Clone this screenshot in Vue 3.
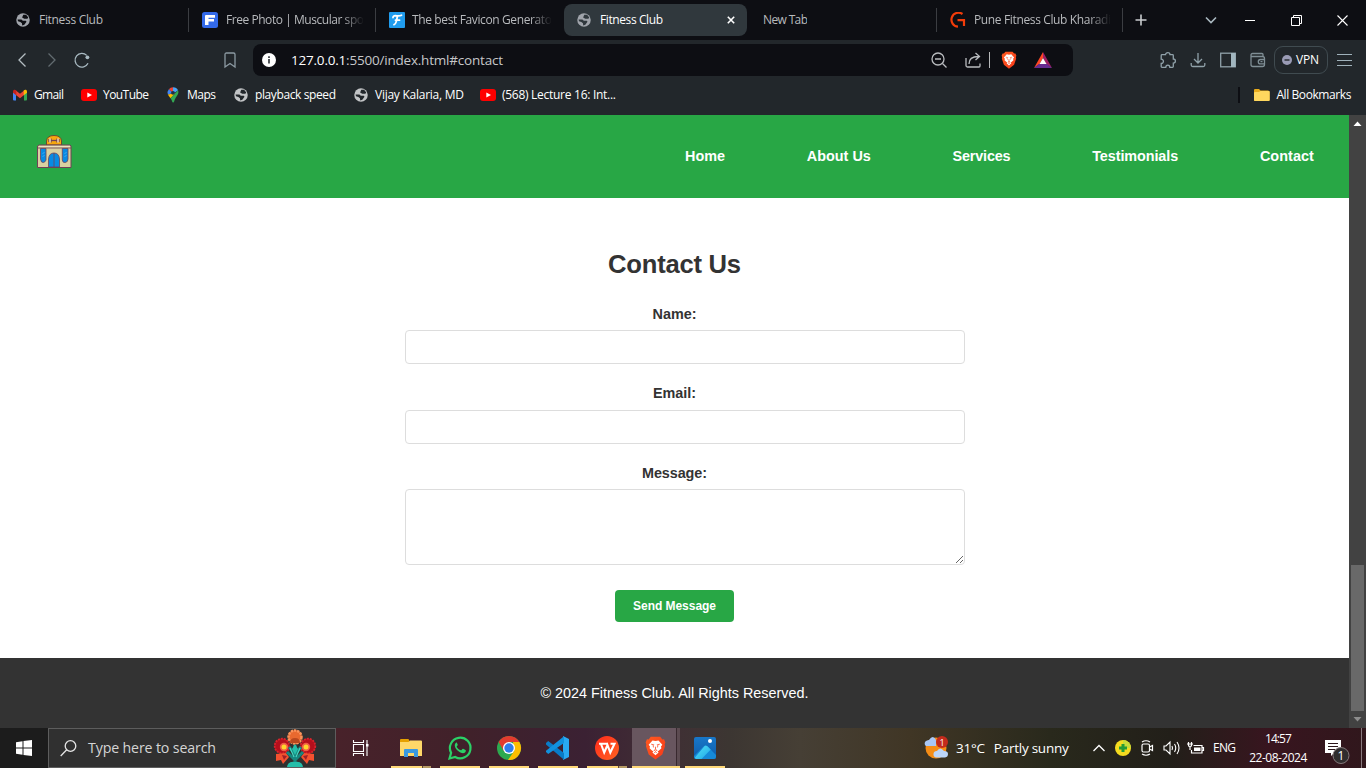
<script setup>
const tabs = [
  { title: 'Fitness Club', icon: 'globe', w: 64, cls: 'first' },
  { title: 'Free Photo | Muscular spo', icon: 'freepik', w: 138, cls: 'fade' },
  { title: 'The best Favicon Generato', icon: 'favicon', w: 140, cls: 'fade last-sep' },
  { title: 'Fitness Club', icon: 'globe', w: 63, cls: 'active' },
  { title: 'New Tab', icon: '', w: 45, cls: 'blank' },
  { title: 'Pune Fitness Club Kharadi', icon: 'gold', w: 137, cls: 'fade end' },
]
const bookmarks = [
  { title: 'Gmail', icon: 'gmail', w: 30, slot: 69 },
  { title: 'YouTube', icon: 'youtube', w: 46, slot: 84 },
  { title: 'Maps', icon: 'maps', w: 29, slot: 68 },
  { title: 'playback speed', icon: 'globe', w: 81, slot: 120 },
  { title: 'Vijay Kalaria, MD', icon: 'globe', w: 89, slot: 127 },
  { title: '(568) Lecture 16: Int...', icon: 'youtube', w: 114, slot: 140 },
]
const links = [
  { t: 'Home', w: 40 },
  { t: 'About Us', w: 64 },
  { t: 'Services', w: 58 },
  { t: 'Testimonials', w: 86 },
  { t: 'Contact', w: 54 },
]
// Tracks text so that it occupies the requested width.
const vFit = {
  mounted(el, { value }) {
    const natural = el.getBoundingClientRect().width
    const gaps = Math.max(1, el.textContent.length - 1)
    el.style.letterSpacing = `${(value - natural) / gaps}px`
  },
}
</script>

<template>
  <div class="screen">
    <svg width="0" height="0" class="defs">
      <defs>
        <linearGradient id="gPhoto" x1="0" y1="0" x2="0" y2="1"><stop offset="0" stop-color="#1877c9" /><stop offset="1" stop-color="#0f5ca9" /></linearGradient>
        <linearGradient id="gHill" x1="0" y1="0" x2="1" y2="1"><stop offset="0" stop-color="#52e1f5" /><stop offset="1" stop-color="#1fa7e8" /></linearGradient>
        <linearGradient id="gBrave" x1="0" y1="0" x2="1" y2="1"><stop offset="0" stop-color="#ff5a1f" /><stop offset="1" stop-color="#f6391a" /></linearGradient>
        <linearGradient id="gWps" x1="0" y1="0" x2="1" y2="1"><stop offset="0" stop-color="#ff2a1c" /><stop offset="1" stop-color="#ff6321" /></linearGradient>
        <symbol id="globe" viewBox="0 0 16 16">
          <circle cx="8" cy="8" r="7.700" fill="currentColor" />
          <path d="M8.300 2h3.200l2.500 3-1 1.500H9.500L7 5zM1.800 7.300h4.400l1.600 1.500h3.400l.8 1.200-2.500 3.300-2.400.9-.3-2.500-1.800-1.400-2.700-.8z" fill="var(--cut)" />
        </symbol>
        <symbol id="lion" viewBox="0 0 24 28">
          <path d="M6.500 1h11l2.500 3 2-.2 1.500 3.700-.8 2 .4 2.500-3.200 9.500-7.900 6-7.900-6L.9 12l.4-2.500-.8-2L2 3.800 4 4z" fill="url(#gBrave)" />
          <path d="M8.500 5.200l3.500.7 3.500-.7 4.500 5-1.600 2 .5 2.200-3.400 3.100-1.500-.6 1.600 2.300L12 22.600l-3.600-3.400 1.600-2.300-1.500.6-3.400-3.100.5-2.200-1.600-2z" fill="#fff" />
          <path d="M7 9.600l3 .6-.8 1.200.6 2M17 9.600l-3 .6.8 1.200-.6 2M12 12.500v3l-1.500 1.100 1.500 1 1.500-1-1.500-1.100M10.500 19.500l1.500-.9 1.500.9" fill="none" stroke="#fb461d" stroke-width=".9" />
        </symbol>
        <symbol id="youtube" viewBox="0 0 16 16"><rect y="2" width="16" height="12" rx="3" fill="#f00" /><path d="M6.300 5.400v5.200L11 8z" fill="#fff" /></symbol>
        <symbol id="gmail" viewBox="0 0 16 16"><path d="M1 5h3v8.500H2q-1 0-1-1z" fill="#4285f4" /><path d="M12 5h3v7.500q0 1-1 1h-2z" fill="#34a853" /><path d="M3.600 3.300L8 6.700l4.400-3.400v4.500L8 11.300 3.600 7.800z" fill="#ea4335" /><path d="M1 4.700C1 2.500 3 2.200 4.300 3.500V8.200L1 5.700z" fill="#c5221f" /><path d="M15 4.700c0-2.200-2-2.500-3.300-1.200V8.200L15 5.700z" fill="#fbbc04" /></symbol>
        <symbol id="maps" viewBox="0 0 16 16"><path d="M8 .3a5.500 5.500 0 0 0-4.200 2L8 6z" fill="#ea4335" /><path d="M3.800 2.300A5.300 5.300 0 0 0 2.900 7.600L8 6z" fill="#4285f4" /><path d="M8 .3c2.500 0 4.200 1.300 5 3L8 7z" fill="#4aa3f5" /><path d="M2.900 7.600c.5 1.300 1.500 2.400 2.600 3.600L10.500 6z" fill="#fbbc04" /><path d="M13 3.300c1.700 4.300-2.600 6.200-3.600 10.500-.5 2.400-2 2.400-2.500 0-.3-1-.7-1.800-1.400-2.600z" fill="#34a853" /><circle cx="8" cy="5.800" r="1.900" fill="#19324a" /></symbol>
        <symbol id="freepik" viewBox="0 0 16 16"><rect width="16" height="16" rx="2.500" fill="#336aea" /><path d="M4 3h9v2.800H6.500v1.200H12v2.500H6.500V13H3V4q0-1 1-1z" fill="#fff" /></symbol>
        <symbol id="favicon" viewBox="0 0 16 16"><rect width="16" height="16" rx="1" fill="#209cee" /><path d="M4 5.500C4 3.500 6 3.700 8 3.800c2 .1 3.500 0 4.500-.6M8.500 4C7.500 8 7.500 12 5 12.700M6.500 8.200h4" fill="none" stroke="#fff" stroke-width="1.800" stroke-linecap="round" /></symbol>
        <symbol id="gold" viewBox="0 0 16 16"><path d="M12.500 2A7 7 0 1 0 8 14.700M7.500 8.200H14V14" fill="none" stroke="#f23c0a" stroke-width="2.200" /></symbol>
      </defs>
    </svg>

    <div class="tabbar">
      <div v-for="(tab, i) in tabs" :key="i" class="tab" :class="tab.cls">
        <svg v-if="tab.icon" class="fav" :class="tab.icon"><use :href="'#' + tab.icon" /></svg>
        <span class="clip"><span v-fit="tab.w" class="t">{{ tab.title }}</span></span>
        <svg v-if="tab.cls === 'active'" class="x" width="8" height="8" viewBox="0 0 8 8"><path d="M.8.800l6.400 6.400M7.200.800L.8 7.200" stroke="#fff" stroke-width="1.600" /></svg>
      </div>
      <div class="wc plus"><svg width="12" height="12"><path d="M6 .5v11M.5 6h11" stroke="#c9cccf" stroke-width="1.600" /></svg></div>
      <div class="wc chev"><svg width="12" height="8"><path d="M1 1.500l5 5 5-5" fill="none" stroke="#a9b8c0" stroke-width="1.600" /></svg></div>
      <div class="wc"><svg width="10" height="10"><path d="M0 5.500h10" stroke="#fff" /></svg></div>
      <div class="wc"><svg width="11" height="11" fill="none" stroke="#fff"><path d="M.5 2.500h8v8h-8zM2.500 2.500v-2h8v8h-2" /></svg></div>
      <div class="wc"><svg width="11" height="11"><path d="M.5.500l10 10M10.500.500l-10 10" stroke="#fff" stroke-width="1.100" /></svg></div>
    </div>

    <div class="toolbar">
      <div class="navs">
        <svg width="8" height="14" fill="none" stroke="#b4bdc2" stroke-width="1.300"><path d="M7.500.500L1 7l6.500 6.500" /></svg>
        <svg width="8" height="14" fill="none" stroke="#626b70" stroke-width="1.300"><path d="M.5.500L7 7 .5 13.500" /></svg>
        <svg width="16" height="16" fill="none" stroke="#a9bac2" stroke-width="1.300"><path d="M12.700 3.400A6.800 6.800 0 1 0 14 11.200" /><circle cx="13.400" cy="5.300" r="1.900" fill="#a9bac2" stroke="none" /></svg>
        <svg class="bm" width="12" height="16" fill="none" stroke="#8c9aa2" stroke-width="1.300"><path d="M1 2.500Q1 1 2.500 1h7Q11 1 11 2.500V15l-5-3.500L1 15z" /></svg>
      </div>
      <div class="address">
        <svg width="14" height="14"><circle cx="7" cy="7" r="7" fill="#fff" /><path d="M7 6v4.500M7 3.300V5" stroke="#33383c" stroke-width="1.700" /></svg>
        <span class="url"><span v-fit="212"><b>127.0.0.1</b>:5500/index.html#contact</span></span>
        <div class="aicons">
          <svg width="16" height="16" fill="none" stroke="#b9bcbf" stroke-width="1.300"><circle cx="7" cy="7" r="6" /><path d="M4 7h6M11.500 11.500l4 4" /></svg>
          <svg class="share" width="16" height="16" fill="none" stroke="#b9bcbf" stroke-width="1.300"><path d="M1 6v7.500Q1 15 2.500 15H14q1 0 1-1v-2.500M4 12c0-5 3-7.500 9.500-7.500M10.500 1l4 3.500-4 3.500" /></svg>
          <i class="bar"></i>
          <svg class="lion" width="16" height="18"><use href="#lion" /></svg>
          <svg class="bat" width="18" height="16"><path d="M9 0v6L5.500 12 0 16z" fill="#ff4724" /><path d="M9 0l9 16-6-4-3-6z" fill="#9e1f63" /><path d="M0 16l5-4h8l5 4z" fill="#662d91" /><path d="M9 6l3.500 6h-7z" fill="#fff" /></svg>
        </div>
      </div>
      <div class="ext">
        <svg width="16" height="16" fill="none" stroke="#90a1a9" stroke-width="1.300"><path d="M2 2.700h3.500C5.500 0 10 0 10 2.700h2.500q.8 0 .8.800V7c2.800 0 2.800 4.200 0 4.200v3.300q0 .8-.8.8h-2.700c0-3-4-3-4 0H2q-.8 0-.8-.8v-3c3 0 3-4.300 0-4.300V3.500q0-.8.800-.8z" /></svg>
        <svg width="16" height="16" fill="none" stroke="#90a1a9" stroke-width="1.300"><path d="M8 1v10M4 7l4 4 4-4M1.200 11v2q0 1.500 1.500 1.500h10.600q1.500 0 1.500-1.500v-2" /></svg>
        <svg width="16" height="16"><rect x=".7" y="1.200" width="14.600" height="13.600" fill="none" stroke="#90a1a9" stroke-width="1.300" /><path d="M11 1h4.500v14H11z" fill="#a2b6bf" /></svg>
        <svg width="16" height="16" fill="none" stroke="#7f8e95" stroke-width="1.300"><path d="M1 3q0-1.500 1.500-1.500H12q1 0 1 1V4.500M1 3v9.500Q1 14.500 3 14.500h9.500q2 0 2-2v-6q0-2-2-2H2.500Q1 4.500 1 3M15 7.500h-4.500a2.200 2.200 0 0 0 0 4.400H15M10.500 9.700h2" /></svg>
      </div>
      <div class="vpn"><svg width="10" height="10"><circle cx="5" cy="5" r="5" fill="#9a9bb5" /><path d="M2.500 5h5" stroke="#24282c" stroke-width="1.400" /></svg><span v-fit="23">VPN</span></div>
      <svg class="burger" width="15" height="12"><path d="M0 .5h15M0 6.500h15M0 11.500h15" stroke="#a0b2bb" /></svg>
    </div>

    <div class="bookmarks">
      <div v-for="b in bookmarks" :key="b.title" class="mark" :style="{ width: b.slot + 'px' }">
        <svg class="bi" :class="b.icon"><use :href="'#' + b.icon" /></svg><span v-fit="b.w">{{ b.title }}</span>
      </div>
      <div class="all">
        <svg width="16" height="14"><path d="M0 2Q0 1 1 1h4l1.500 1.500H14q1.500 0 1.500 1.500v8q0 1-1 1H1q-1 0-1-1z" fill="#e9ab1c" /><path d="M0 5q0-1 1-1h4l1.500-1H15q.7 0 .7 1v8q0 1-1 1H1q-1 0-1-1z" fill="#ffd75e" /></svg>
        <span v-fit="75">All Bookmarks</span>
      </div>
    </div>

    <div class="viewport">
      <div class="page">
        <header>
          <svg class="logo" width="36" height="34" viewBox="0 0 36 34">
            <path d="M10.500 10V6Q11 .5 18 .5T25.500 6v4z" fill="#f7a80d" stroke="#6a4b30" />
            <path d="M15 5.500h6.500" stroke="#704257" stroke-width="1.300" /><path d="M14 3.500v4M22 3.500v4" stroke="#e9d0bd" stroke-width="1.800" /><path d="M12.700 4v3M23.300 4v3M15.300 3.500v4M20.700 3.500v4" stroke="#704257" stroke-width=".8" />
            <path d="M1.500 11L3 10h31l1 1v21.500H1.500z" fill="#d9d1a1" stroke="#704257" />
            <path d="M2 13h33" stroke="#704257" stroke-width=".8" /><path d="M3 11.500h31" stroke="#eee2bf" />
            <path d="M4.500 13.500h5.500v11.500q-.5 2-2.700 2.500T4.500 24zM26.300 13.500H32V24q0 3-2.700 3.500t-3-2.500z" fill="#078be4" stroke="#704257" stroke-width=".8" />
            <path d="M12.500 32V24Q13 18 18 18t5.500 6v8z" fill="#078be4" stroke="#704257" stroke-width=".8" /><path d="M18 18v14" stroke="#704257" stroke-width=".8" />
            <path d="M6.500 19l2-2M6.500 22l2-2M28.500 19l2-2M28.500 22l2-2" stroke="#70baf0" stroke-width=".6" />
          </svg>
          <nav><a v-for="l in links" :key="l.t" v-fit="l.w">{{ l.t }}</a></nav>
        </header>
        <section>
          <h2><span v-fit="133">Contact Us</span></h2>
          <form @submit.prevent>
            <label><span v-fit="44">Name:</span></label><input type="text" />
            <label class="mid"><span v-fit="43">Email:</span></label><input class="email" type="text" />
            <label class="mid"><span v-fit="65">Message:</span></label><textarea></textarea>
            <button type="button"><span v-fit="83">Send Message</span></button>
          </form>
        </section>
        <footer><span v-fit="268">© 2024 Fitness Club. All Rights Reserved.</span></footer>
      </div>
      <div class="scroll">
        <svg width="17" height="17"><path d="M4.500 11h8l-4-4.500z" fill="#fff" /></svg>
        <div class="thumb"></div>
        <svg width="17" height="17"><path d="M4.500 6h8l-4 4.500z" fill="#8d8d8d" /></svg>
      </div>
    </div>

    <div class="taskbar">
      <div class="start"><svg width="16" height="16" fill="#fff"><path d="M0 2.300L6.500 1.300V7.500H0zM7.500 1.100L16 0v7.500H7.500zM0 8.500h6.500v6.200L0 13.700zM7.500 8.500H16V16L7.500 14.900z" /></svg></div>
      <div class="search">
        <svg width="17" height="17" fill="none" stroke="#e5e5e5" stroke-width="1.300"><circle cx="10.500" cy="6" r="5.300" /><path d="M6.700 9.700L.7 16" /></svg>
        <span v-fit="128">Type here to search</span>
        <svg class="flower" width="44" height="38" viewBox="0 0 44 38">
          <circle cx="9" cy="17" r="7.500" fill="#b50f1c" /><circle cx="35" cy="17" r="7.500" fill="#b50f1c" />
          <circle cx="9" cy="17" r="7.300" fill="none" stroke="#d8242c" stroke-width="1.800" stroke-dasharray="2 1" /><circle cx="35" cy="17" r="7.300" fill="none" stroke="#d8242c" stroke-width="1.800" stroke-dasharray="2 1" />
          <circle cx="11" cy="18" r="4.200" fill="#f05c46" /><circle cx="33" cy="18" r="4.200" fill="#f05c46" /><circle cx="11" cy="18" r="2.500" fill="#ffd52b" /><circle cx="33" cy="18" r="2.500" fill="#ffd52b" />
          <circle cx="22" cy="8" r="7" fill="#e9692f" /><circle cx="22" cy="8" r="6.500" fill="none" stroke="#f9935b" stroke-width="2.500" stroke-dasharray="2.300 .9" /><path d="M17 14q0-5 5-5t5 5z" fill="#b8481f" />
          <path d="M3 25l10-1 3 4-6 7-2-4-5 1zM41 25l-10-1-3 4 6 7 2-4 5 1z" fill="#f4512f" /><path d="M9 26l5 1-3 4zM35 26l-5 1 3 4z" fill="#9e2027" />
          <path d="M22 38V16M22 25l-6-7M22 25l6-7M22 31l-8-8M22 31l8-8" stroke="#16877f" stroke-width="3" /><path d="M22 15l3 5-3 6-3-6zM14 38q1-6 8-5 7-1 8 5z" fill="#25bea9" /><path d="M17 19l4 9M27 19l-4 9" stroke="#43d9c2" stroke-width="1.200" />
        </svg>
      </div>
      <div class="view"><svg width="17" height="16" fill="none" stroke="#fff" stroke-width="1.100"><path d="M1.500 4.500h10v7h-10zM1.500 0v2.500h10V0M1.500 16v-2.500h10V16M15 0v16" /><path d="M14 4h2.500v2.500H14z" fill="#fff" stroke="none" /></svg></div>
      <div class="apps">
        <div class="app stack"><svg width="22" height="20"><path d="M0 2Q0 1 1 1h7.500l1 2v2H0z" fill="#e6a100" /><path d="M0 4h8.500l1.500-1.500h11q1 0 1 1V18H0z" fill="#ffd869" /><path d="M4 12q0-1 1-1h12q1 0 1 1v7h-4v-4H8v4H4z" fill="#3b99e0" /></svg></div>
        <div class="app"><svg width="24" height="24"><path d="M1.500 22.500l1.600-5.700A10.300 10.300 0 1 1 7.200 21z" fill="none" stroke="#2bd167" stroke-width="2.200" /><path d="M8.200 6.500c-3 2.600-.7 6.200 1.700 8.300 2.800 2.600 6.800 3.900 8 .3.300-1.200-1.600-1.700-2.700-2.300-1-.4-1.300 1.400-2 1.400-2 .2-4.500-2.700-4.500-3.700.3-.7 1.400-1 1-2C9.200 7.500 9 6 8.200 6.500z" fill="#2bd167" /></svg></div>
        <div class="app"><svg width="24" height="24" viewBox="0 0 24 24"><circle cx="12" cy="12" r="12" fill="#2da94f" /><path d="M22.400 6A12 12 0 0 1 11 24l6.200-9L16 6z" fill="#fdbd00" /><path d="M12 6h10.400A12 12 0 0 0 1.600 6l5.200 9z" fill="#e33b2e" /><circle cx="12" cy="12" r="6" fill="#fff" /><circle cx="12" cy="12" r="4.700" fill="#307cec" /></svg></div>
        <div class="app"><svg width="24" height="24"><path d="M17 0l6 3v18l-6 3z" fill="#29a9f2" /><path d="M0 7l2.200-2L18 17v6.700L0 8.500z" fill="#087cc8" /><path d="M0 16l2.200 2L18 7V.2L0 14.700z" fill="#1191de" /></svg></div>
        <div class="app stack"><svg width="24" height="24"><circle cx="12" cy="12" r="12" fill="url(#gWps)" /><path d="M4 7.800h9M6 8l3.200 8.500L12.500 9l2.800 7.500L19.500 7.800h-4" fill="none" stroke="#fff" stroke-width="2.100" /></svg></div>
        <div class="app now"><svg width="21" height="24"><use href="#lion" /></svg></div>
        <div class="app"><svg width="22" height="22"><rect width="22" height="22" rx="2" fill="url(#gPhoto)" /><path d="M0 19L10 9q1.500-1.500 3 0l9 9v2q0 2-2 2H2q-2 0-2-2z" fill="#168ad8" /><path d="M1 21L10 10q1.500-2 3.500-.5l4 4-3-2q-1.500-1-3 .5L3 22z" fill="url(#gHill)" /><path d="M1 20.500L10.500 9.500q1.200-1.200 2.500-.2l3.500 3.400L7.500 22H2z" fill="url(#gHill)" /><circle cx="16" cy="4" r="2" fill="#fff" /></svg></div>
      </div>
      <div class="weather">
        <svg width="25" height="24"><circle cx="12" cy="12" r="10.500" fill="#f58d16" /><path d="M2 10a3 3 0 0 1 0-5q2-1 3-1 4-6 7 0v6z" fill="#a9c7f5" /><path d="M12 21.500a3.300 3.300 0 0 1 1-6.500q3-5 7 0 4 0 4 3t-3 3.500z" fill="#bcd6fa" /><circle cx="18" cy="6" r="6" fill="#c42b1c" /><text x="18" y="9.500" text-anchor="middle" font-size="9" fill="#fff">1</text></svg>
        <span v-fit="29" class="deg">31°C</span><span v-fit="75">Partly sunny</span>
      </div>
      <div class="tray">
        <div><svg width="12" height="8"><path d="M.5 7L6 1.500 11.500 7" fill="none" stroke="#fff" stroke-width="1.300" /></svg></div>
        <div><svg width="16" height="16"><circle cx="8" cy="8" r="8" fill="#f4db1f" /><path d="M8 0a8 8 0 0 1 8 8H8z" fill="#c7dc39" /><path d="M6.500 4h3v2.500H12v3H9.500V12h-3V9.500H4v-3h2.500z" fill="#249b35" /></svg></div>
        <div><svg width="12" height="16" fill="none" stroke="#fff" stroke-width="1.200"><rect x="1" y="4" width="7.500" height="8" rx="1.500" /><path d="M8.500 7l3-1.500v5L8.500 9M1 2q4-2.500 8 0M1 14q4 2.500 8 0" /></svg></div>
        <div><svg width="17" height="14" fill="none" stroke="#fff" stroke-width="1.100"><path d="M1 5h2l4-4v12L3 9H1zM9 5q1 2 0 4M11.500 3q2.500 4 0 8M14 1q4 6 0 12" /></svg></div>
        <div><svg width="17" height="13" fill="none" stroke="#fff" stroke-width="1.200"><path d="M6.500 3.500h8.500v7.500H4.500V8M15 5.500h1.500v3H15M1.500 0v3.500q0 1 1.500 1t1.500-1V0M3 4.500V8M0 2h6" /><path d="M7 5.500h6.500V9H7z" fill="#fff" stroke="none" /></svg></div>
      </div>
      <span class="lang"><span v-fit="23">ENG</span></span>
      <div class="clock"><span v-fit="27">14:57</span><span v-fit="58">22-08-2024</span></div>
      <div class="notice"><svg width="25" height="24"><path d="M0 0h16v13H9l-3 3v-3H0z" fill="#fff" /><path d="M3 3.500h10M3 6.500h10M3 9.500h7" stroke="#2c171c" stroke-width="1.100" /><circle cx="16" cy="15.500" r="8" fill="#302d2e" stroke="#85797b" /><text x="16" y="20" text-anchor="middle" font-size="12" fill="#fff">1</text></svg></div>
    </div>
  </div>
</template>

<style>
body { overflow: hidden; }
</style>
<style scoped>
* { box-sizing: border-box; }
.screen { width: 1366px; height: 768px; display: flex; flex-direction: column; font: 12px/16px "Open Sans", "Noto Sans", sans-serif; color: #fff; background: #0d0e13; white-space: nowrap; overflow: hidden; }
.defs { position: absolute; }
svg { display: block; flex: none; overflow: visible; }
span { display: inline-block; flex: none; }
.tabbar { height: 40px; display: flex; align-items: center; flex: none; }
.tab { --cut: #0d0e13; flex: none; width: 187px; height: 24px; display: flex; align-items: center; padding-left: 13px; border-right: 1px solid #3b3d42; color: #b8babd; }
.tab.first { width: 189px; padding-left: 16px; }
.tab.last-sep { border-right-color: transparent; width: 188px; }
.tab.active { --cut: #30383d; width: 183px; height: 32px; background: #30383d; border: 0; border-radius: 8px; color: #fff; }
.tab.blank { width: 190px; padding-left: 16px; }
.tab.end { width: 186px; }
.fav { width: 16px; height: 16px; margin-right: 8px; }
.favicon { margin-right: 7px; }
.fav.globe { width: 14px; height: 14px; margin-right: 9px; color: #a0a4ab; }
.clip { overflow: hidden; }
.fade .clip { mask-image: linear-gradient(to right, #000 calc(100% - 22px), transparent 100%); }
.x { margin-left: auto; margin-right: 12px; }
.wc { width: 46px; display: flex; justify-content: center; }
.plus { width: 36px; }
.chev { width: 104px; margin-right: -36px; }
.toolbar { height: 40px; flex: none; background: #22272b; display: flex; align-items: center; }
.navs { width: 253px; display: flex; align-items: center; padding-left: 18px; gap: 22px; }
.navs svg:nth-child(3) { margin-left: -4px; }
.bm { margin-left: 112px; }
.address { width: 820px; height: 32px; border-radius: 8px; background: #0d0e13; display: flex; align-items: center; padding-left: 9px; }
.url { margin-left: 15px; font-size: 13.500px; color: #c6c7c9; width: 640px; }
.url b { font-weight: 400; color: #fff; }
.aicons { display: flex; align-items: center; }
.share { margin-left: 18px; }
.bar { width: 1px; height: 16px; background: #b6b8ba; margin-left: 8px; }
.lion { margin-left: 11px; }
.bat { margin-left: 17px; }
.ext { display: flex; gap: 14px; margin-left: 87px; }
.vpn { width: 54px; height: 28px; border: 1px solid #404b50; border-radius: 9px; margin-left: 8px; display: flex; align-items: center; padding-left: 7px; gap: 4px; }
.burger { margin-left: 9px; }
.bookmarks { height: 35px; flex: none; background: #22272b; display: flex; align-items: center; padding: 0 15px 5px 12px; }
.mark { --cut: #22272b; display: flex; align-items: center; flex: none; }
.bi { width: 16px; height: 16px; margin-right: 6px; color: #c2c4c6; }
.bi.globe { width: 14px; height: 14px; margin: 0 7px 0 1px; }
.all { margin-left: auto; border-left: 2px solid #0d0e13; height: 16px; display: flex; align-items: center; gap: 6px; padding-left: 14px; }
.viewport { height: 613px; flex: none; display: flex; }
.page { width: 1349px; background: #fff; font-family: "Liberation Sans", Arial, sans-serif; color: #333; }
header { height: 83px; background: #28a745; display: flex; align-items: center; padding: 0 35px 2px 36px; }
.logo { margin-top: -8px; }
nav { margin-left: auto; width: 629px; display: flex; justify-content: space-between; color: #fff; font-size: 14.400px; font-weight: 700; }
section { height: 460px; padding-top: 48px; }
h2 { margin: 0 0 22px; height: 36px; line-height: 36px; font-size: 25.600px; text-align: center; }
form { width: 540px; margin: 0 auto; display: flex; flex-direction: column; }
label { height: 20px; line-height: 20px; font-size: 14.400px; font-weight: 700; text-align: center; margin-bottom: 6px; }
label.mid { margin-top: 19px; }
input, textarea { display: block; width: 560px; height: 34px; border: 1px solid #ddd; border-radius: 4px; margin: 0; padding: 8px; background: #fff; outline: 0; flex: none; }
input.email { margin-top: 1px; }
textarea { height: 76px; resize: both; }
button { align-self: center; width: 119px; height: 32px; margin-top: 25px; border: 0; border-radius: 4px; background: #28a745; color: #fff; font: bold 12px/16px "Liberation Sans", Arial, sans-serif; padding: 0; }
footer { height: 70px; background: #333; color: #fff; font-size: 14.400px; line-height: 70px; text-align: center; }
.scroll { width: 17px; background: #424242; display: flex; flex-direction: column; }
.thumb { width: 13px; height: 146px; background: #696969; margin: auto 2px 0; }
.taskbar { height: 40px; flex: none; display: flex; align-items: center; background: linear-gradient(90deg, #1c1c1c 48px, #48222a 336px, #40212a 470px, #3b2133 585px, #402e35 660px, #3c3632 730px, #463f35 800px, #403625 910px, #29291c 1050px, #221f19 1170px, #38151f 1270px, #30171c 1366px); }
.taskbar > div { flex: none; }
.start { width: 48px; display: flex; justify-content: center; }
.search { width: 288px; height: 40px; background: #303030; border: 1px solid #5d5d5d; display: flex; align-items: center; padding-left: 11px; gap: 11px; font-size: 14.200px; color: #d5d5d5; }
.flower { margin-left: 46px; }
.view { width: 48px; display: flex; justify-content: center; }
.apps { display: flex; width: 341px; padding-left: 2px; }
.app { flex: none; width: 49px; height: 40px; display: flex; align-items: center; justify-content: center; background: linear-gradient(#ffd979, #ffd979) 5px 100% / 40px 2px no-repeat; }
.app.stack { background: linear-gradient(90deg, #ffd979 31px, #5e4738 31px 32px, #b69b65 32px) 5px 100% / 40px 2px no-repeat; }
.app.now { background: linear-gradient(#ffd979, #ffd979) 1px 100% / 48px 2px no-repeat, linear-gradient(90deg, transparent 1px, #68565f 1px 45px, #39292f 45px 46px, #5c4b51 46px); }
.app.now svg { margin-right: 1px; }
.weather { width: 162px; margin-left: 199px; display: flex; align-items: center; font-size: 13.500px; }
.deg { margin: 0 9px 0 7px; }
.tray { display: flex; width: 127px; padding-left: 1px; }
.tray div { flex: none; width: 24px; display: flex; justify-content: center; align-items: center; }
.lang { width: 36px; }
.clock { width: 58px; height: 36px; display: flex; flex-direction: column; align-items: center; justify-content: space-between; line-height: 17px; }
.notice { width: 55px; height: 40px; padding: 12px 0 0 18px; border-right: 1px solid #88797d; }
</style>
